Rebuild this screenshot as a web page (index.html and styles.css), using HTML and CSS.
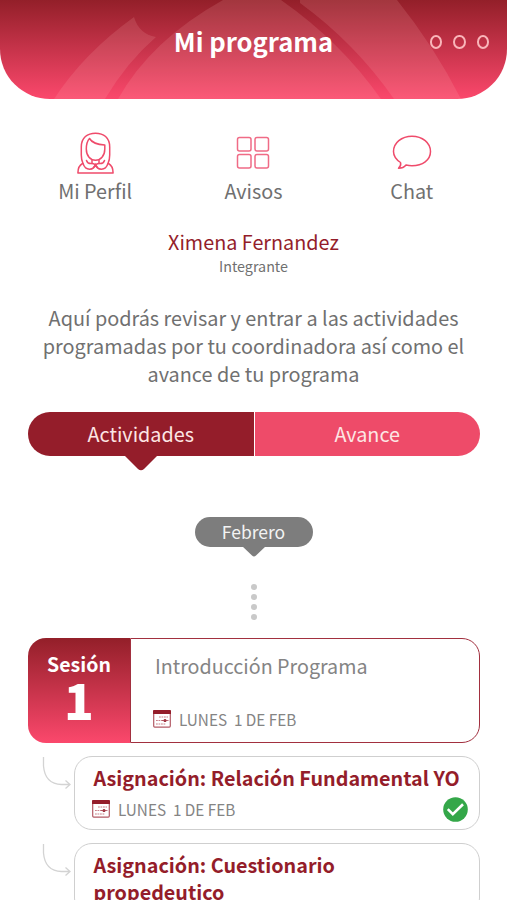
FILE: index.html
```
<!DOCTYPE html>
<html lang="es">
<head>
  <meta charset="utf-8">
  <title>Mi programa</title>
  <link rel="stylesheet" href="styles.css">
</head>
<body>

<svg class="defs" width="0" height="0">
  <symbol id="calendar" viewBox="0 0 18 18">
    <rect x=".7" y=".7" width="16.6" height="16.4" rx="1" fill="#fff" stroke="#b35a65" stroke-width="1.2"/>
    <path d="M0 1q0-1 1-1h16q1 0 1 1v3H0z" fill="#941d2a"/>
    <path d="M6 7h9M3 10.500h7M3 14h10" stroke="#c98088" stroke-width="1.200" stroke-dasharray="1.800 .7"/>
    <circle cx="12" cy="10.500" r="1.500" fill="#941d2a"/>
    <path d="M9 10.500h6.500" stroke="#a94450" stroke-width=".8"/>
  </symbol>
  <symbol id="branch" viewBox="0 0 30 34">
    <path d="M1.500 0v9q1.500 18 18 18.500h8M23.500 23.500l4.500 4-4.500 4" fill="none" stroke="#d3d3d3" stroke-width="1.300"/>
  </symbol>
</svg>

<div class="header">
  <svg class="header-art" viewBox="0 0 507 99" preserveAspectRatio="none">
    <path d="M54 99Q84 53 134 17Q139 34 156 37Q127 62 105 99z"/>
    <path d="M118 99Q151 40 223 0H281Q341 42 381 99z"/>
    <path d="M300 0H397Q434 46 461 99H394Q355 43 300 3z"/>
  </svg>
  <h1 class="title">Mi programa</h1>
  <div class="menu"><i></i><i></i><i></i></div>
</div>

<div class="nav">
  <a class="nav-item">
    <svg class="profile-icon" width="38" height="42" viewBox="0 0 38 42">
      <g fill="none" stroke="#ef4b6b" stroke-width="1.500" stroke-linejoin="round" stroke-linecap="round">
        <path d="M6 31.500Q4.300 28 4.300 23V15C4.300 5.500 10.500 1.200 18.500 1.200S32.700 5.500 32.700 15V23Q32.700 28 31 31.500"/>
        <path d="M12.500 6.500Q9.300 10 9.300 17C9.300 24 13.500 28.300 18.500 28.300S27.800 24 27.800 17V13Q16 12.500 12.500 6.500z"/>
        <path d="M15 28V31.500M22 28V31.500"/>
        <path d="M6 31.500Q8 37.200 12.500 37.200Q17.500 37.200 18.500 32Q19.500 37.200 24.500 37.200Q29 37.200 31 31.500"/>
        <path d="M9.500 28.500Q10.500 32 15 31.500Q18 31.500 20.500 35.500M27.500 28.500Q26.500 32 22 31.500Q19 31.500 16.500 35.500"/>
        <path d="M5.500 31.500Q.9 34 .9 41H36.100Q36.100 34 31.500 31.500"/>
      </g>
    </svg>
    <span>Mi Perfil</span>
  </a>
  <a class="nav-item">
    <svg width="34" height="42" viewBox="0 0 34 42">
      <g fill="none" stroke="#f06b86" stroke-width="1.500">
        <rect x="1.500" y="5.500" width="13.500" height="13.500" rx="2"/>
        <rect x="19" y="5.500" width="13.500" height="13.500" rx="2"/>
        <rect x="1.500" y="22.500" width="13.500" height="13.500" rx="2"/>
        <rect x="19" y="22.500" width="13.500" height="13.500" rx="2"/>
      </g>
    </svg>
    <span>Avisos</span>
  </a>
  <a class="nav-item">
    <svg width="40" height="42" viewBox="0 0 40 42">
      <path d="M8.500 30.500C4 27.500 1.500 24 1.500 19.500C1.500 11 9.500 4.200 20 4.200S38.500 11 38.500 19.500S30.500 33.800 20 33.800Q17 33.800 14 33Q11.500 36.300 6.500 36.300Q9.500 33.500 8.500 30.500z" fill="none" stroke="#ef4b6b" stroke-width="1.500" stroke-linejoin="round"/>
    </svg>
    <span>Chat</span>
  </a>
</div>

<div class="user">
  <div class="user-name">Ximena Fernandez</div>
  <div class="user-role">Integrante</div>
</div>

<p class="intro">Aquí podrás revisar y entrar a las actividades<br>programadas por tu coordinadora así como el<br>avance de tu programa</p>

<div class="tabs">
  <a class="tab active">Actividades
    <svg class="tab-arrow" width="34" height="16" viewBox="0 0 34 16"><path d="M0 0H34L20 14Q17 16.500 14 14z" fill="#941d2a"/></svg>
  </a>
  <a class="tab">Avance</a>
</div>

<div class="month">
  <div class="month-name">Febrero</div>
  <svg width="24" height="11" viewBox="0 0 24 11"><path d="M0 0H24L14 9.500Q12 11.500 10 9.500z" fill="#7d7d7d"/></svg>
</div>
<div class="dots"><i></i><i></i><i></i><i></i></div>

<div class="session">
  <div class="session-number">
    <span>Sesión</span>
    <b>1</b>
  </div>
  <div class="session-info">
    <div class="session-title">Introducción Programa</div>
    <div class="date"><svg width="18" height="18"><use href="#calendar"/></svg><span>LUNES&nbsp; 1 DE FEB</span></div>
  </div>
</div>

<div class="task-row">
  <svg class="branch" width="30" height="34"><use href="#branch"/></svg>
  <div class="task">
    <div class="task-title">Asignación: Relación Fundamental YO</div>
    <div class="date"><svg width="18" height="18"><use href="#calendar"/></svg><span>LUNES&nbsp; 1 DE FEB</span>
      <svg class="check" width="25" height="25" viewBox="0 0 25 25">
        <circle cx="12.500" cy="12.500" r="12.300" fill="#34a749"/>
        <path d="M4.800 12.200L9.800 17.200L20 7.200" fill="none" stroke="#fff" stroke-width="2.600"/>
      </svg>
    </div>
  </div>
</div>

<div class="task-row">
  <svg class="branch" width="30" height="34"><use href="#branch"/></svg>
  <div class="task">
    <div class="task-title">Asignación: Cuestionario<br>propedeutico</div>
  </div>
</div>

</body>
</html>
```
FILE: styles.css
```
* {
  box-sizing: border-box;
}

body {
  margin: 0;
  height: 900px;
  overflow: hidden;
  background: #fff;
  color: #707070;
  font-family: "Noto Sans CJK SC", "Noto Sans", sans-serif;
}

.defs {
  position: absolute;
}

/* header */
.header {
  position: relative;
  display: flex;
  justify-content: center;
  height: 99px;
  padding-top: 23px;
  overflow: hidden;
  border-radius: 0 0 50px 50px;
  background: linear-gradient(#931f29, #fb486c);
}

.header-art {
  position: absolute;
  top: 0;
  left: 0;
  width: 100%;
  height: 100%;
  fill: rgba(255, 190, 190, .15);
}

.title {
  position: relative;
  margin: 0;
  color: #fff;
  font-size: 25.6px;
  line-height: 36px;
  font-weight: bold;
}

.menu {
  position: absolute;
  top: 35px;
  right: 18px;
  display: flex;
  gap: 11px;
}

.menu i {
  width: 12.5px;
  height: 14px;
  border: 2px solid #f9b5b9;
  border-radius: 50%;
}

/* shortcuts */
.nav {
  display: flex;
  padding: 33px 16px 0;
}

.nav-item {
  flex: 1;
  display: flex;
  flex-direction: column;
  align-items: center;
  font-size: 19.8px;
  line-height: 34px;
}

.profile-icon {
  margin-left: 2px;
}

/* user */
.user {
  padding-top: 18px;
  text-align: center;
}

.user-name {
  color: #941d2a;
  font-size: 19.8px;
  line-height: 32px;
}

.user-role {
  font-size: 14.3px;
  line-height: 16px;
}

.intro {
  margin: 30px 0 24px;
  font-size: 19.85px;
  line-height: 28px;
  text-align: center;
}

/* tabs */
.tabs {
  display: flex;
  gap: 1px;
  margin: 0 27px 0 28px;
}

.tab {
  position: relative;
  flex: 1;
  height: 44px;
  border-radius: 0 22px 22px 0;
  background: #ee4b69;
  color: #fde6e4;
  font-size: 19.8px;
  line-height: 44px;
  text-align: center;
}

.tab.active {
  border-radius: 22px 0 0 22px;
  background: #941d2a;
}

.tab-arrow {
  position: absolute;
  top: 43px;
  left: 50%;
  margin-left: -17px;
}

/* month */
.month {
  display: flex;
  flex-direction: column;
  align-items: center;
  margin-top: 61px;
}

.month-name {
  width: 118px;
  height: 30px;
  border-radius: 15px;
  background: #7d7d7d;
  color: #f3f3f3;
  font-size: 17.5px;
  line-height: 29px;
  text-align: center;
}

.month svg {
  margin-top: -1px;
}

.dots {
  display: flex;
  flex-direction: column;
  align-items: center;
  gap: 4px;
  margin-top: 27px;
}

.dots i {
  width: 6px;
  height: 6px;
  border-radius: 50%;
  background: #c9c9c9;
}

/* session */
.session {
  display: flex;
  height: 105px;
  margin: 18px 27px 0 28px;
}

.session-number {
  display: flex;
  flex-direction: column;
  align-items: center;
  width: 102px;
  padding-top: 11px;
  border-radius: 18px 0 0 18px;
  background: linear-gradient(#931f29, #fb486c);
  color: #fff;
}

.session-number span {
  font-size: 19.5px;
  line-height: 30px;
  font-weight: bold;
}

.session-number b {
  font-size: 49px;
  line-height: 40px;
  font-weight: 900;
}

.session-info {
  flex: 1;
  padding: 12px 0 0 24px;
  border: 1px solid #a2303f;
  border-radius: 0 18px 18px 0;
}

.session-title {
  height: 56px;
  color: #848484;
  font-size: 19.7px;
  line-height: 30px;
}

.session-info .date {
  margin-left: -2px;
}

.date {
  display: flex;
  align-items: center;
  gap: 8px;
  height: 24px;
  color: #848484;
  font-size: 15.3px;
  line-height: 22px;
}

/* assignments */
.task-row {
  display: flex;
  margin: 13px 27px 0 42px;
}

.branch {
  flex: none;
  margin-top: 1px;
}

.task {
  flex: 1;
  height: 73.5px;
  margin-left: 2px;
  padding: 7px 11px 0 17px;
  border: 1px solid #cfcfcf;
  border-radius: 18px;
}

.task-title {
  padding-left: 1.5px;
  color: #941d2a;
  font-size: 19.75px;
  line-height: 27px;
  font-weight: bold;
  white-space: nowrap;
}

.task .date {
  margin-top: 6px;
}

.date span {
  margin-bottom: 1px;
}

.check {
  margin-left: auto;
}
```
